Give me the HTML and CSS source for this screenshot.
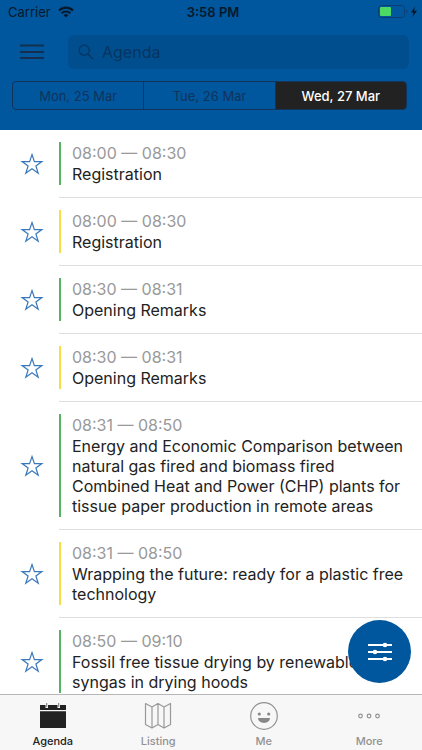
FILE: index.html
```html
<!DOCTYPE html>
<html lang="en">
<head>
    <meta charset="UTF-8">
    <meta name="viewport" content="width=device-width, initial-scale=1.0">
    <title>Agenda</title>
    <link rel="stylesheet" href="styles.css">
</head>
<body>
    <!-- Shared icons -->
    <svg class="icon-defs" aria-hidden="true">
        <symbol id="icon-star" viewBox="0 0 24 24">
            <path d="M12 2.5 L14.4 9.6 H21.9 L15.9 14 L18.2 21.2 L12 16.8 L5.8 21.2 L8.1 14 L2.1 9.6 H9.6 Z" fill="none" stroke="#3a78bb" stroke-width="1.2"/>
        </symbol>
    </svg>

    <div class="app">
        <header class="header">
            <div class="status-bar">
                <div class="carrier">
                    <span>Carrier</span>
                    <svg width="16" height="12" viewBox="0 0 16 12" aria-hidden="true">
                        <g fill="none" stroke="#08182b" stroke-width="2.2">
                            <path d="M1 4.5 a10 10 0 0 1 14 0"/>
                            <path d="M3.6 7.3 a6.3 6.3 0 0 1 8.8 0"/>
                        </g>
                        <path d="M5.6 9.2 a3.5 3.5 0 0 1 4.8 0 L8 11.6 Z" fill="#08182b"/>
                    </svg>
                </div>
                <span class="clock">3:58 PM</span>
                <div class="battery">
                    <svg width="40" height="14" viewBox="0 0 40 14" aria-hidden="true">
                        <rect x="0.5" y="0.5" width="26" height="12" rx="3" fill="none" stroke="#0a3f73"/>
                        <rect x="2" y="2" width="11" height="9" rx="1" fill="#4cd964"/>
                        <path d="M28 4.5 a2.3 2.3 0 0 1 0 4 Z" fill="#0a3f73"/>
                        <path d="M37 1.5 L33 7.5 H35.5 L34.5 12 L39 5.8 H36.2 Z" fill="#08182b"/>
                    </svg>
                </div>
            </div>

            <div class="search-row">
                <button type="button" class="menu-button" aria-label="Menu">
                    <svg width="24" height="16" viewBox="0 0 24 16" aria-hidden="true">
                        <path d="M0 1.5 H24 M0 8 H24 M0 14 H24" stroke="#15304f" stroke-width="2"/>
                    </svg>
                </button>
                <label class="search">
                    <svg width="16" height="16" viewBox="0 0 16 16" aria-hidden="true">
                        <circle cx="6.2" cy="6.2" r="5" fill="none" stroke="#063561" stroke-width="1.3"/>
                        <path d="M10 10 L15 15" stroke="#063561" stroke-width="1.5"/>
                    </svg>
                    <input type="search" placeholder="Agenda" aria-label="Search agenda">
                </label>
            </div>

            <div class="days">
                <button type="button" class="day">Mon, 25 Mar</button>
                <button type="button" class="day">Tue, 26 Mar</button>
                <button type="button" class="day active">Wed, 27 Mar</button>
            </div>
        </header>

        <main class="sessions">
            <article class="session">
                <button type="button" class="star" aria-label="Add to favourites"><svg width="24" height="24"><use href="#icon-star"/></svg></button>
                <div class="session-body">
                    <div class="session-info green">
                        <p class="time">08:00 — 08:30</p>
                        <h2 class="title">Registration</h2>
                    </div>
                </div>
            </article>

            <article class="session">
                <button type="button" class="star" aria-label="Add to favourites"><svg width="24" height="24"><use href="#icon-star"/></svg></button>
                <div class="session-body">
                    <div class="session-info yellow">
                        <p class="time">08:00 — 08:30</p>
                        <h2 class="title">Registration</h2>
                    </div>
                </div>
            </article>

            <article class="session">
                <button type="button" class="star" aria-label="Add to favourites"><svg width="24" height="24"><use href="#icon-star"/></svg></button>
                <div class="session-body">
                    <div class="session-info green">
                        <p class="time">08:30 — 08:31</p>
                        <h2 class="title">Opening Remarks</h2>
                    </div>
                </div>
            </article>

            <article class="session">
                <button type="button" class="star" aria-label="Add to favourites"><svg width="24" height="24"><use href="#icon-star"/></svg></button>
                <div class="session-body">
                    <div class="session-info yellow">
                        <p class="time">08:30 — 08:31</p>
                        <h2 class="title">Opening Remarks</h2>
                    </div>
                </div>
            </article>

            <article class="session">
                <button type="button" class="star" aria-label="Add to favourites"><svg width="24" height="24"><use href="#icon-star"/></svg></button>
                <div class="session-body">
                    <div class="session-info green">
                        <p class="time">08:31 — 08:50</p>
                        <h2 class="title">Energy and Economic Comparison between natural gas fired and biomass fired Combined Heat and Power (CHP) plants for tissue paper production in remote areas</h2>
                    </div>
                </div>
            </article>

            <article class="session">
                <button type="button" class="star" aria-label="Add to favourites"><svg width="24" height="24"><use href="#icon-star"/></svg></button>
                <div class="session-body">
                    <div class="session-info yellow">
                        <p class="time">08:31 — 08:50</p>
                        <h2 class="title">Wrapping the future: ready for a plastic free technology</h2>
                    </div>
                </div>
            </article>

            <article class="session">
                <button type="button" class="star" aria-label="Add to favourites"><svg width="24" height="24"><use href="#icon-star"/></svg></button>
                <div class="session-body">
                    <div class="session-info green">
                        <p class="time">08:50 — 09:10</p>
                        <h2 class="title">Fossil free tissue drying by renewable syngas in drying hoods</h2>
                    </div>
                </div>
            </article>
        </main>

        <button type="button" class="filter-button" aria-label="Filter">
            <svg width="26" height="20" viewBox="0 0 26 20" aria-hidden="true">
                <path d="M1 3 H25 M1 10 H25 M1 17 H25" stroke="#fff" stroke-width="2"/>
                <g fill="#fff">
                    <circle cx="18" cy="3" r="2.3"/>
                    <circle cx="8" cy="10" r="2.3"/>
                    <circle cx="18" cy="17" r="2.3"/>
                </g>
            </svg>
        </button>

        <nav class="tab-bar">
            <a href="#agenda" class="tab active">
                <svg width="28" height="28" viewBox="0 0 28 28" aria-hidden="true">
                    <path d="M1 3 H6.5 V6 H9 V3 H18.5 V6 H21 V3 H27 V8 H1 Z M1 9.3 H27 V26 H1 Z" fill="#222"/>
                    <path d="M7.7 1 V5 M19.7 1 V5" stroke="#777" stroke-width="1"/>
                </svg>
                <span>Agenda</span>
            </a>
            <a href="#listing" class="tab">
                <svg width="28" height="28" viewBox="0 0 28 28" aria-hidden="true">
                    <path d="M1.5 1.5 L8 5 L14 1.5 L20 5 L26.5 1.5 V22.5 L20 26 L14 22.5 L8 26 L1.5 22.5 Z M8 5 V26 M14 1.5 V22.5 M20 5 V26" fill="none" stroke="#999" stroke-width="1.2" stroke-linejoin="round"/>
                </svg>
                <span>Listing</span>
            </a>
            <a href="#me" class="tab">
                <svg width="28" height="28" viewBox="0 0 28 28" aria-hidden="true">
                    <circle cx="14" cy="14" r="13.3" fill="none" stroke="#929292" stroke-width="1.2"/>
                    <circle cx="9.3" cy="12" r="1.6" fill="#888"/>
                    <circle cx="18.7" cy="12" r="1.6" fill="#888"/>
                    <path d="M8 16 H20 C19.5 22.5 8.5 22.5 8 16 Z" fill="#888"/>
                </svg>
                <span>Me</span>
            </a>
            <a href="#more" class="tab">
                <svg width="28" height="28" viewBox="0 0 28 28" aria-hidden="true">
                    <g fill="none" stroke="#929292" stroke-width="1.2">
                        <circle cx="5.5" cy="14" r="1.8"/>
                        <circle cx="14" cy="14" r="1.8"/>
                        <circle cx="22.5" cy="14" r="1.8"/>
                    </g>
                </svg>
                <span>More</span>
            </a>
        </nav>
    </div>
</body>
</html>
```
FILE: styles.css
```css
:root {
    --primary-color: #00579e;
    --dark-color: #222;
    --outline-color: #12335a;
    --text-gray: #999;
    --line-color: #dedfe1;
}

* {
    margin: 0;
    padding: 0;
    box-sizing: border-box;
}

body {
    font-family: Inter, "Liberation Sans", sans-serif;
    background: #fff;
    color: var(--dark-color);
}

button {
    font: inherit;
    background: none;
    border: none;
    cursor: pointer;
}

svg {
    display: block;
    flex-shrink: 0;
}

.icon-defs {
    display: none;
}

.app {
    position: relative;
    display: flex;
    flex-direction: column;
    height: 100vh;
}

.header {
    flex-shrink: 0;
    padding-bottom: 20px;
    background: var(--primary-color);
}

/* Status bar */
.status-bar {
    display: grid;
    grid-template-columns: 1fr auto 1fr;
    align-items: center;
    height: 23px;
    padding: 0 4px 0 8px;
    font-size: 13px;
    color: #08182b;
}

.carrier {
    display: flex;
    align-items: center;
    gap: 7px;
}

.clock {
    font-weight: 600;
}

.battery {
    justify-self: end;
}

/* Search */
.search-row {
    display: flex;
    align-items: center;
    gap: 24px;
    padding: 12px 13px 12px 20px;
}

.search {
    display: flex;
    flex: 1;
    align-items: center;
    gap: 8px;
    height: 34px;
    padding: 0 10px;
    border-radius: 6px;
    background: #004e8e;
}

.search input {
    flex: 1;
    min-width: 0;
    border: none;
    outline: none;
    background: none;
    font: inherit;
    font-size: 16px;
    color: #063561;
}

.search input::placeholder {
    color: #063561;
    opacity: 1;
}

/* Day switch */
.days {
    display: flex;
    height: 29px;
    margin: 0 15px 0 12px;
    border: 1px solid var(--outline-color);
    border-radius: 4px;
    overflow: hidden;
}

.day {
    flex: 1;
    font-size: 13px;
    color: var(--outline-color);
}

.day + .day {
    border-left: 1px solid var(--outline-color);
}

.day.active {
    background: var(--dark-color);
    color: #fff;
    font-weight: 500;
}

/* Session list */
.sessions {
    flex: 1;
    min-height: 0;
    overflow: hidden;
}

.session {
    display: flex;
    padding-left: 20px;
}

.star {
    width: 24px;
    margin-right: 15px;
}

.session-body {
    flex: 1;
    padding: 12px 16px 12px 0;
    border-bottom: 1px solid var(--line-color);
}

.session-info {
    padding: 0 0 1px 11px;
    border-left: 2px solid;
}

.session-info.green {
    border-color: #55b565;
}

.session-info.yellow {
    border-color: #f8de45;
}

.time {
    font-size: 16px;
    line-height: 22px;
    color: var(--text-gray);
}

.title {
    font-size: 16px;
    font-weight: 400;
    line-height: 20px;
}

.filter-button {
    position: absolute;
    right: 11px;
    bottom: 67px;
    display: flex;
    align-items: center;
    justify-content: center;
    width: 63px;
    height: 63px;
    border-radius: 50%;
    background: var(--primary-color);
}

/* Bottom tabs */
.tab-bar {
    display: flex;
    flex-shrink: 0;
    height: 56px;
    border-top: 1px solid #b8b8b8;
    background: #f7f7f7;
}

.tab {
    display: flex;
    flex: 1;
    flex-direction: column;
    align-items: center;
    gap: 4px;
    padding-top: 7px;
    font-size: 11px;
    font-weight: 500;
    line-height: 14px;
    color: #929292;
    text-decoration: none;
}

.tab.active {
    color: var(--dark-color);
}
```
